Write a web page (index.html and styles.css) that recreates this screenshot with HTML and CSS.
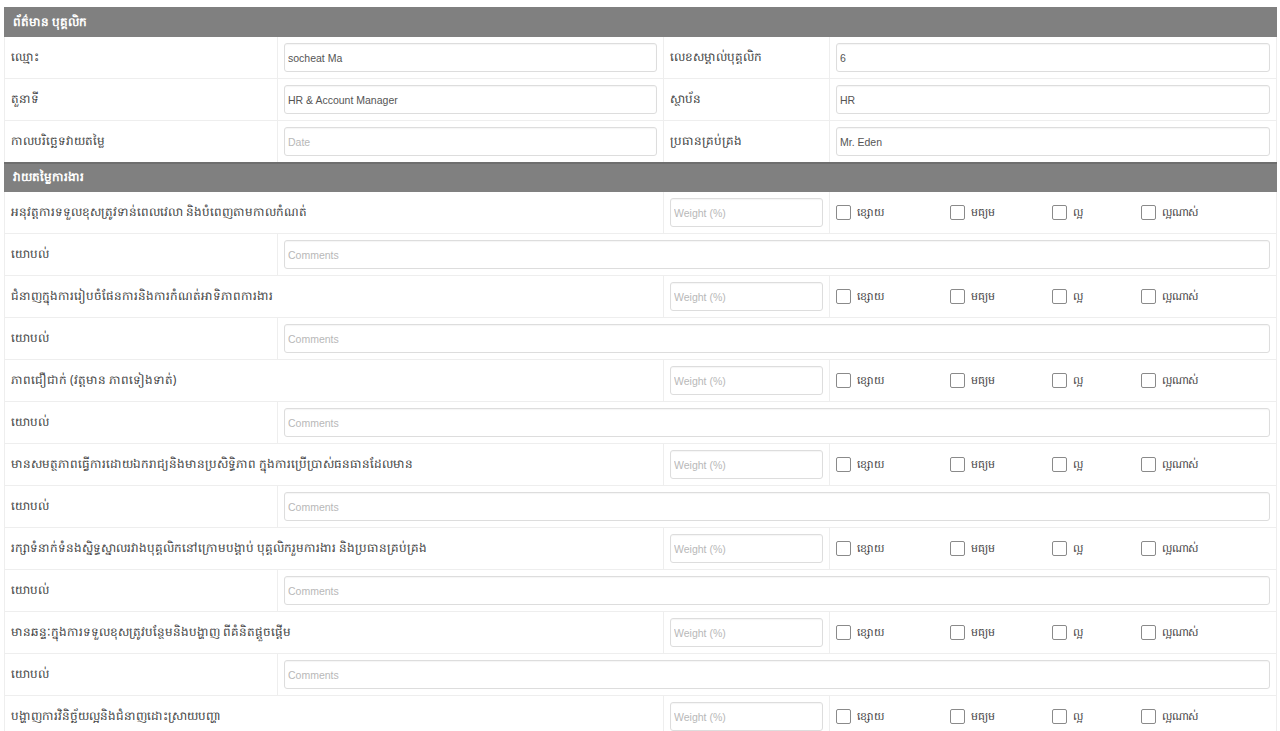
FILE: index.html
```html
<!DOCTYPE html>
<html lang="km">
<head>
<meta charset="utf-8">
<title>វាយតម្លៃការងារ</title>
<link rel="stylesheet" href="styles.css">
</head>
<body>
<table class="form-table">
  <colgroup>
    <col class="c1"><col class="c2"><col class="c3"><col class="c4">
  </colgroup>
  <tr class="section"><th colspan="4">ព័ត៌មាន បុគ្គលិក</th></tr>
  <tr>
    <td class="label">ឈ្មោះ</td>
    <td><input class="field" type="text" value="socheat Ma"></td>
    <td class="label">លេខសម្គាល់បុគ្គលិក</td>
    <td><input class="field" type="text" value="6"></td>
  </tr>
  <tr>
    <td class="label">តួនាទី</td>
    <td><input class="field" type="text" value="HR &amp; Account Manager"></td>
    <td class="label">ស្ថាប័ន</td>
    <td><input class="field" type="text" value="HR"></td>
  </tr>
  <tr>
    <td class="label">កាលបរិច្ឆេទវាយតម្លៃ</td>
    <td><input class="field" type="text" placeholder="Date"></td>
    <td class="label">ប្រធានគ្រប់គ្រង</td>
    <td><input class="field" type="text" value="Mr. Eden"></td>
  </tr>
  <tr class="section section-2"><th colspan="4">វាយតម្លៃការងារ</th></tr>

  <tr>
    <td class="label" colspan="2">អនុវត្តការទទួលខុសត្រូវទាន់ពេលវេលា និងបំពេញតាមកាលកំណត់</td>
    <td><input class="field" type="text" placeholder="Weight (%)"></td>
    <td><div class="ratings"><label class="rate r1"><span class="box"></span>ខ្សោយ</label><label class="rate r2"><span class="box"></span>មធ្យម</label><label class="rate r3"><span class="box"></span>ល្អ</label><label class="rate r4"><span class="box"></span>ល្អណាស់</label></div></td>
  </tr>
  <tr>
    <td class="label">យោបល់</td>
    <td colspan="3"><input class="field" type="text" placeholder="Comments"></td>
  </tr>

  <tr>
    <td class="label" colspan="2">ជំនាញក្នុងការរៀបចំផែនការនិងការកំណត់អាទិភាពការងារ</td>
    <td><input class="field" type="text" placeholder="Weight (%)"></td>
    <td><div class="ratings"><label class="rate r1"><span class="box"></span>ខ្សោយ</label><label class="rate r2"><span class="box"></span>មធ្យម</label><label class="rate r3"><span class="box"></span>ល្អ</label><label class="rate r4"><span class="box"></span>ល្អណាស់</label></div></td>
  </tr>
  <tr>
    <td class="label">យោបល់</td>
    <td colspan="3"><input class="field" type="text" placeholder="Comments"></td>
  </tr>

  <tr>
    <td class="label" colspan="2">ភាពជឿជាក់ (វត្តមាន ភាពទៀងទាត់)</td>
    <td><input class="field" type="text" placeholder="Weight (%)"></td>
    <td><div class="ratings"><label class="rate r1"><span class="box"></span>ខ្សោយ</label><label class="rate r2"><span class="box"></span>មធ្យម</label><label class="rate r3"><span class="box"></span>ល្អ</label><label class="rate r4"><span class="box"></span>ល្អណាស់</label></div></td>
  </tr>
  <tr>
    <td class="label">យោបល់</td>
    <td colspan="3"><input class="field" type="text" placeholder="Comments"></td>
  </tr>

  <tr>
    <td class="label" colspan="2">មានសមត្ថភាពធ្វើការដោយឯករាជ្យនិងមានប្រសិទ្ធិភាព ក្នុងការប្រើប្រាស់ធនធានដែលមាន</td>
    <td><input class="field" type="text" placeholder="Weight (%)"></td>
    <td><div class="ratings"><label class="rate r1"><span class="box"></span>ខ្សោយ</label><label class="rate r2"><span class="box"></span>មធ្យម</label><label class="rate r3"><span class="box"></span>ល្អ</label><label class="rate r4"><span class="box"></span>ល្អណាស់</label></div></td>
  </tr>
  <tr>
    <td class="label">យោបល់</td>
    <td colspan="3"><input class="field" type="text" placeholder="Comments"></td>
  </tr>

  <tr>
    <td class="label" colspan="2">រក្សាទំនាក់ទំនងស្និទ្ធស្នាលរវាងបុគ្គលិកនៅក្រោមបង្គាប់ បុគ្គលិករួមការងារ និងប្រធានគ្រប់គ្រង</td>
    <td><input class="field" type="text" placeholder="Weight (%)"></td>
    <td><div class="ratings"><label class="rate r1"><span class="box"></span>ខ្សោយ</label><label class="rate r2"><span class="box"></span>មធ្យម</label><label class="rate r3"><span class="box"></span>ល្អ</label><label class="rate r4"><span class="box"></span>ល្អណាស់</label></div></td>
  </tr>
  <tr>
    <td class="label">យោបល់</td>
    <td colspan="3"><input class="field" type="text" placeholder="Comments"></td>
  </tr>

  <tr>
    <td class="label" colspan="2">មានឆន្ទៈក្នុងការទទួលខុសត្រូវបន្ថែមនិងបង្ហាញ ពីគំនិតផ្តួចផ្តើម</td>
    <td><input class="field" type="text" placeholder="Weight (%)"></td>
    <td><div class="ratings"><label class="rate r1"><span class="box"></span>ខ្សោយ</label><label class="rate r2"><span class="box"></span>មធ្យម</label><label class="rate r3"><span class="box"></span>ល្អ</label><label class="rate r4"><span class="box"></span>ល្អណាស់</label></div></td>
  </tr>
  <tr>
    <td class="label">យោបល់</td>
    <td colspan="3"><input class="field" type="text" placeholder="Comments"></td>
  </tr>

  <tr>
    <td class="label" colspan="2">បង្ហាញការវិនិច្ឆ័យល្អនិងជំនាញដោះស្រាយបញ្ហា</td>
    <td><input class="field" type="text" placeholder="Weight (%)"></td>
    <td><div class="ratings"><label class="rate r1"><span class="box"></span>ខ្សោយ</label><label class="rate r2"><span class="box"></span>មធ្យម</label><label class="rate r3"><span class="box"></span>ល្អ</label><label class="rate r4"><span class="box"></span>ល្អណាស់</label></div></td>
  </tr>
  <tr>
    <td class="label">យោបល់</td>
    <td colspan="3"><input class="field" type="text" placeholder="Comments"></td>
  </tr>
</table>
</body>
</html>
```
FILE: styles.css
```css
html, body {
  margin: 0;
  padding: 0;
  background: #ffffff;
}

body {
  padding: 7px 4px 0 4px;
  font-family: "Noto Sans", "DejaVu Sans", "Liberation Sans", sans-serif;
  color: #333333;
}

.form-table {
  width: 1272px;
  border-collapse: collapse;
  table-layout: fixed;
}

.c1 { width: 273px; }
.c2 { width: 386px; }
.c3 { width: 166px; }
.c4 { width: 447px; }

.form-table td {
  border: 1px solid #eeeeee;
  padding: 6px 6px;
  height: 29px;
  vertical-align: middle;
}

.form-table td.label {
  padding-left: 6px;
  font-size: 12px;
  color: #444444;
  white-space: nowrap;
  overflow: hidden;
}

.section th {
  background: #808080;
  color: #ffffff;
  text-align: left;
  font-size: 12px;
  font-weight: bold;
  padding: 5px 8px;
  height: 18px;
  line-height: 18px;
  border: 1px solid #808080;
}

.section-2 th {
  border-top: 2px solid #6e6e6e;
  height: 18px;
  line-height: 18px;
  padding: 4px 8px 5px 8px;
}

.field {
  display: block;
  box-sizing: border-box;
  width: 100%;
  height: 29px;
  margin: 0;
  padding: 4px 3px;
  border: 1px solid #dddddd;
  border-radius: 3px;
  font-family: "Liberation Sans", Arial, sans-serif;
  font-size: 10.5px;
  color: #555555;
  background: #ffffff;
  box-shadow: inset 0 1px 1px rgba(0,0,0,0.04);
}

.field::placeholder {
  color: #b8b8b8;
}

.ratings {
  display: flex;
  align-items: center;
}

.rate {
  display: flex;
  align-items: center;
  gap: 6px;
  font-size: 11px;
  color: #444444;
}

.r1 { width: 114px; }
.r2 { width: 102px; }
.r3 { width: 89px; }
.r4 { width: 100px; }

.box {
  display: inline-block;
  width: 13px;
  height: 13px;
  border: 1px solid #8a8a8a;
  border-radius: 2px;
  background: #ffffff;
}
```
